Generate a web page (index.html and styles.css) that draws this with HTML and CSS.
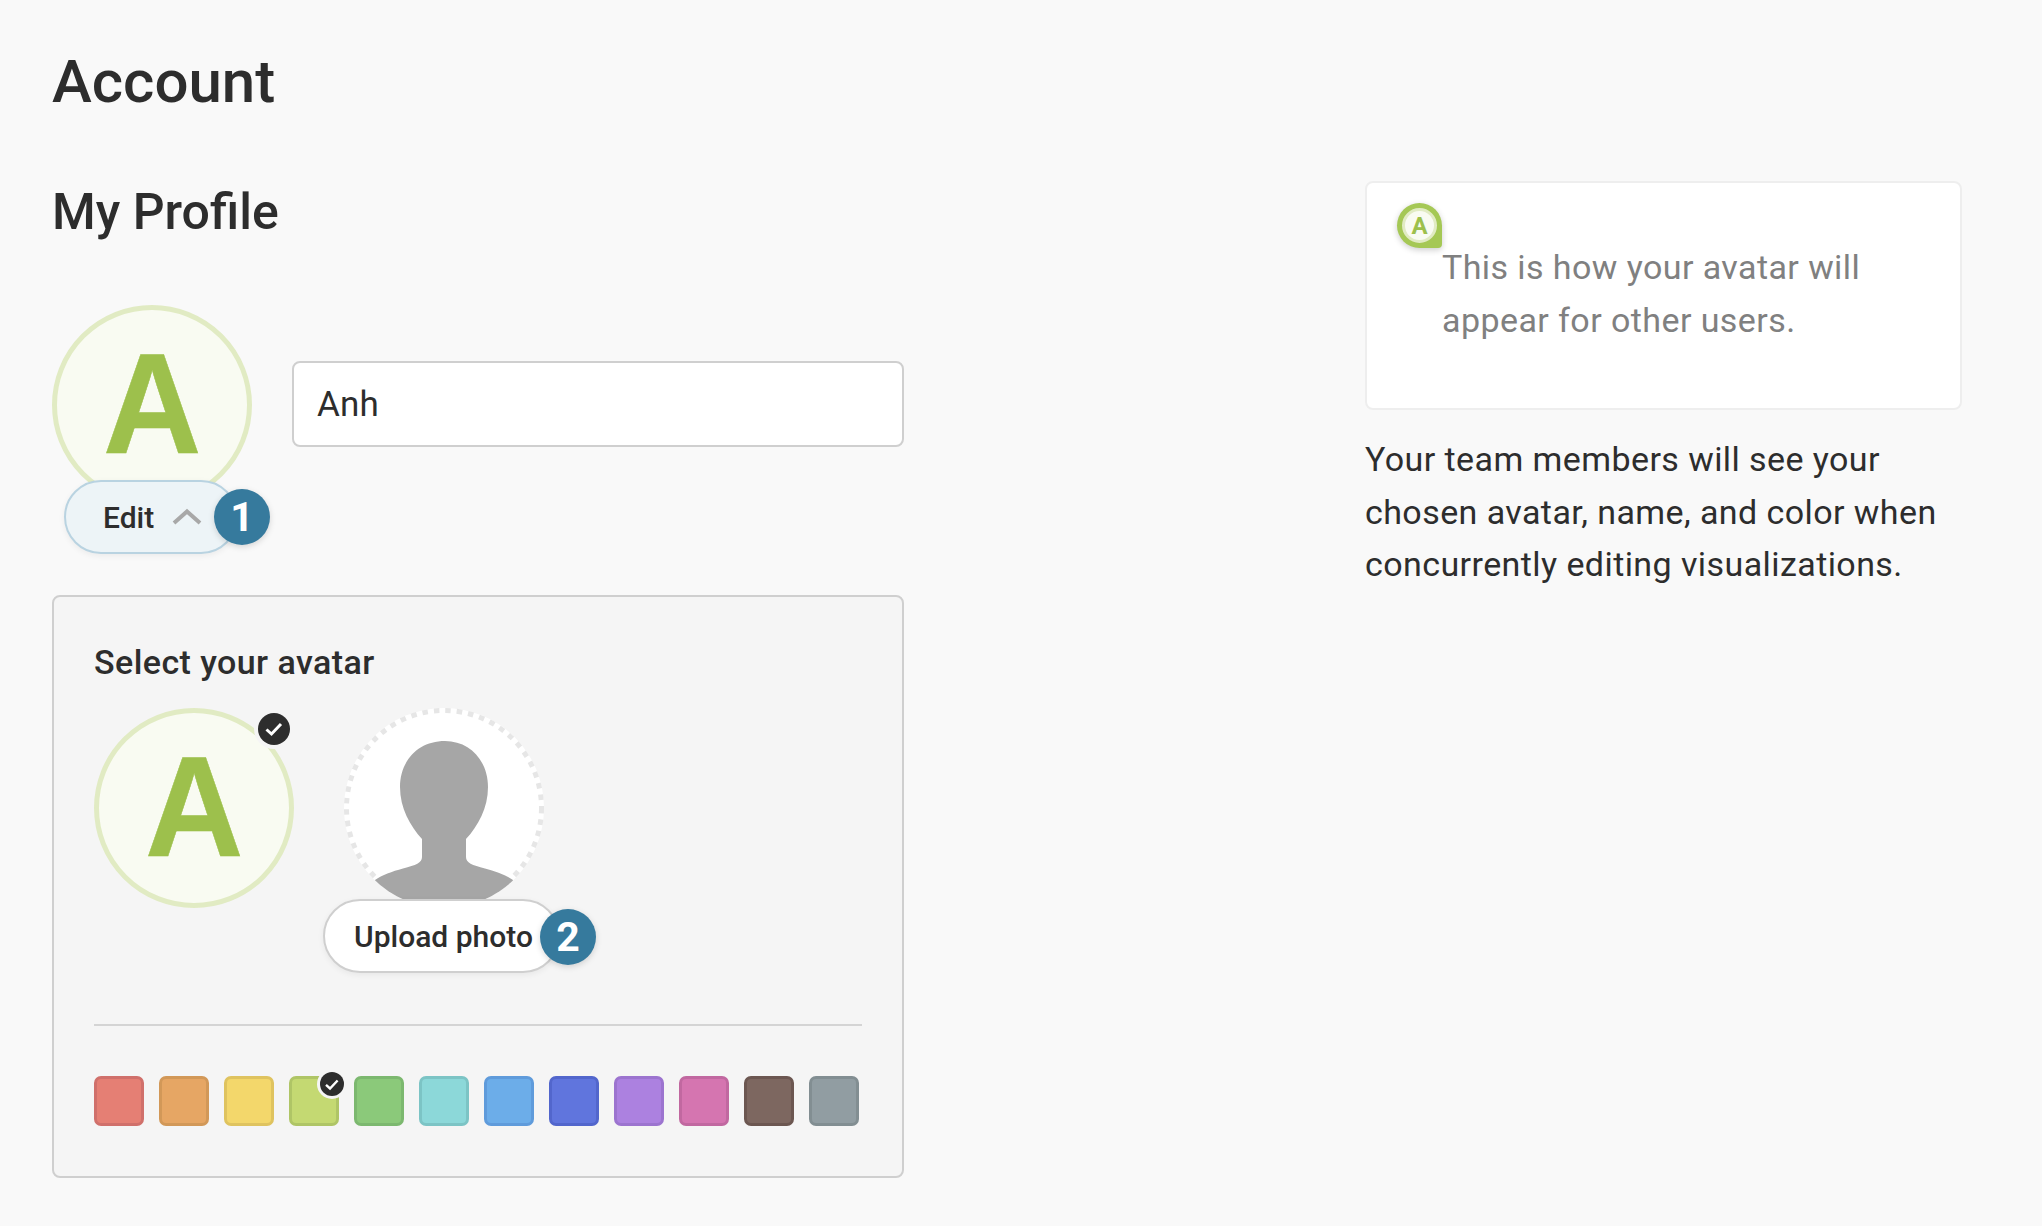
FILE: index.html

```html
<!DOCTYPE html>
<html lang="en">
<head>
    <meta charset="UTF-8">
    <title>Account</title>
    <link rel="stylesheet" href="styles.css">
</head>
<body>
    <h1 class="title">Account</h1>
    <div class="columns">
        <section class="profile">
            <h2 class="secondTitle">My Profile</h2>
            <div class="nameRow">
                <div class="avatar">
                    <span class="avatarLetter">A</span>
                    <button class="pill editPill">
                        Edit
                        <svg class="chevron" width="32" height="20" viewBox="0 0 32 20"><path d="M3 16 L16 4.5 L29 16" fill="none" stroke="#a8a8a8" stroke-width="4"/></svg>
                    </button>
                    <span class="step stepEdit">1</span>
                </div>
                <input class="nameInput" type="text" value="Anh">
            </div>

            <div class="panel">
                <h3 class="panelTitle">Select your avatar</h3>
                <div class="choices">
                    <div class="avatar">
                        <span class="avatarLetter">A</span>
                        <span class="tick tickAvatar">
                            <svg width="20" height="16" viewBox="0 0 20 16"><path d="M2.5 8.5 L7.5 13 L17 3" fill="none" stroke="#fff" stroke-width="3"/></svg>
                        </span>
                    </div>
                    <div class="upload">
                        <svg class="silhouette" width="200" height="200" viewBox="0 0 200 200">
                            <circle cx="100" cy="100" r="100" fill="#fff"/>
                            <circle cx="100" cy="100" r="97.5" fill="none" stroke="#e6e6e6" stroke-width="5" stroke-dasharray="5.5 6"/>
                            <clipPath id="round"><circle cx="100" cy="100" r="100"/></clipPath>
                            <path clip-path="url(#round)" fill="#a6a6a6" d="M101 33 C74 33 56 53 56 79 C56 100 66 118 78 131 V149 C78 155 72 157 59 160.5 C48 163.5 38 167 31 172 L31 200 H169 V172 C162 167 152 163.5 141 160.5 C128 157 122 155 122 149 V131 C134 118 144 100 144 79 C144 53 126 33 101 33Z"/>
                        </svg>
                        <button class="pill uploadPill">Upload photo</button>
                        <span class="step stepUpload">2</span>
                    </div>
                </div>
                <div class="swatches">
                    <span class="swatch red"></span>
                    <span class="swatch orange"></span>
                    <span class="swatch yellow"></span>
                    <span class="swatch lime">
                        <span class="tick tickSwatch">
                            <svg width="16" height="13" viewBox="0 0 20 16"><path d="M2.5 8.5 L7.5 13 L17 3" fill="none" stroke="#fff" stroke-width="3"/></svg>
                        </span>
                    </span>
                    <span class="swatch green"></span>
                    <span class="swatch teal"></span>
                    <span class="swatch sky"></span>
                    <span class="swatch blue"></span>
                    <span class="swatch purple"></span>
                    <span class="swatch pink"></span>
                    <span class="swatch brown"></span>
                    <span class="swatch grey"></span>
                </div>
            </div>
        </section>

        <aside class="side">
            <div class="previewCard">
                <span class="pin"><span class="pinInner">A</span></span>
                <p class="previewText">This is how your avatar will appear for other users.</p>
            </div>
            <p class="sideText">Your team members will see your chosen avatar, name, and color when concurrently editing visualizations.</p>
        </aside>
    </div>
</body>
</html>
```

FILE: styles.css

```css
* {
    margin: 0;
    padding: 0;
    box-sizing: border-box;
}

body {
    font-family: Roboto, sans-serif;
    background-color: #f9f9f9;
    color: #2d2d2d;
    padding: 46px 52px 0;
}

.title {
    font-size: 60px;
    font-weight: 500;
    line-height: 72px;
}

.columns {
    display: flex;
    gap: 461px;
}

.profile {
    width: 852px;
    flex: none;
}

.secondTitle {
    font-size: 50px;
    font-weight: 500;
    line-height: 56px;
    margin-top: 66px;
}

.nameRow {
    display: flex;
    align-items: center;
    gap: 40px;
    margin-top: 65px;
}

.avatar {
    position: relative;
    width: 200px;
    height: 200px;
    flex: none;
    display: flex;
    align-items: center;
    justify-content: center;
    border: 5px solid #e1ebc3;
    border-radius: 50%;
    background-color: #f9fbf2;
}

.avatarLetter {
    font-family: "Liberation Sans", sans-serif;
    font-weight: 700;
    font-size: 142px;
    line-height: 1;
    color: #9dc04c;
    transform: scaleX(0.96);
    margin-top: -2px;
    -webkit-text-stroke: 0.5px #9dc04c;
}

.nameInput {
    flex: 1;
    height: 86px;
    margin-bottom: 2px;
    padding: 0 23px;
    font-family: Roboto, sans-serif;
    font-size: 35px;
    letter-spacing: 0.2px;
    color: #2d2d2d;
    background-color: #fff;
    border: 2px solid #cfcfcf;
    border-radius: 8px;
}

.pill {
    position: absolute;
    display: flex;
    align-items: center;
    height: 74px;
    font-family: Roboto, sans-serif;
    font-size: 30px;
    font-weight: 500;
    color: #2d2d2d;
    border-radius: 37px;
    box-shadow: 0 2px 6px rgba(0, 0, 0, 0.06);
}

.editPill {
    left: 7px;
    top: 170px;
    width: 174px;
    padding-left: 37px;
    gap: 17px;
    background-color: #edf4f7;
    border: 2px solid #b9d3e1;
}

.step {
    position: absolute;
    width: 56px;
    height: 56px;
    display: flex;
    align-items: center;
    justify-content: center;
    font-size: 41px;
    font-weight: 700;
    color: #fff;
    background-color: #367a9d;
    border-radius: 50%;
    box-shadow: 0 2px 6px rgba(0, 0, 0, 0.15);
}

.stepEdit {
    left: 157px;
    top: 179px;
}

.panel {
    margin-top: 90px;
    height: 583px;
    padding: 46px 40px 0;
    background-color: #f5f5f5;
    border: 2px solid #cfcfcf;
    border-radius: 8px;
}

.panelTitle {
    font-size: 34px;
    font-weight: 500;
    letter-spacing: 0.43px;
    line-height: 38px;
}

.choices {
    display: flex;
    gap: 50px;
    margin-top: 27px;
    padding-bottom: 116px;
    border-bottom: 2px solid #d4d4d4;
    width: 768px;
}

.tick {
    position: absolute;
    display: flex;
    align-items: center;
    justify-content: center;
    background-color: #2d2d2d;
    border-radius: 50%;
}

.tickAvatar {
    left: 159px;
    top: 0;
    width: 32px;
    height: 32px;
    box-shadow: 0 0 0 4px #f5f5f5;
}

.upload {
    position: relative;
    width: 200px;
    height: 200px;
    flex: none;
}

.silhouette {
    display: block;
}

.uploadPill {
    left: -21px;
    top: 191px;
    width: 237px;
    padding-left: 29px;
    background-color: #fff;
    border: 2px solid #cfcfcf;
}

.stepUpload {
    left: 196px;
    top: 201px;
}

.swatches {
    display: flex;
    gap: 15px;
    margin-top: 50px;
}

.swatch {
    position: relative;
    width: 50px;
    height: 50px;
    border: 3px solid;
    border-radius: 7px;
}

.tickSwatch {
    right: -8px;
    top: -7px;
    width: 24px;
    height: 24px;
    box-shadow: 0 0 0 3px #f5f5f5;
}

.red { background-color: #e57f74; border-color: #d0706b; }
.orange { background-color: #e6a664; border-color: #d29858; }
.yellow { background-color: #f3d76b; border-color: #dfc35f; }
.lime { background-color: #c4d972; border-color: #afc566; }
.green { background-color: #8bc97a; border-color: #7cb86f; }
.teal { background-color: #8cd8d9; border-color: #7cc4c5; }
.sky { background-color: #6cade9; border-color: #5f9bdb; }
.blue { background-color: #6075dd; border-color: #5266cc; }
.purple { background-color: #ac81e0; border-color: #9c74cf; }
.pink { background-color: #d575b0; border-color: #c168a0; }
.brown { background-color: #7d6760; border-color: #6c5751; }
.grey { background-color: #919da2; border-color: #828e92; }

.side {
    width: 597px;
    flex: none;
    margin-top: 63px;
}

.previewCard {
    position: relative;
    height: 229px;
    padding: 58px 60px 0 75px;
    background-color: #fff;
    border: 2px solid #eee;
    border-radius: 8px;
}

.previewText {
    font-size: 34px;
    letter-spacing: 0.42px;
    line-height: 53px;
    color: #808080;
}

.pin {
    position: absolute;
    left: 30px;
    top: 20px;
    width: 45px;
    height: 45px;
    display: flex;
    align-items: center;
    justify-content: center;
    background-color: #a5c855;
    border-radius: 50% 50% 4px 50%;
    box-shadow: 0 2px 6px rgba(0, 0, 0, 0.2);
}

.pinInner {
    width: 35px;
    height: 35px;
    display: flex;
    align-items: center;
    justify-content: center;
    font-size: 24px;
    font-weight: 700;
    color: #9dc04c;
    background-color: #f9fbf2;
    border: 3px solid #e1ebc3;
    border-radius: 50%;
}

.sideText {
    margin-top: 23px;
    font-size: 34px;
    letter-spacing: 0.42px;
    line-height: 52.5px;
}
```
